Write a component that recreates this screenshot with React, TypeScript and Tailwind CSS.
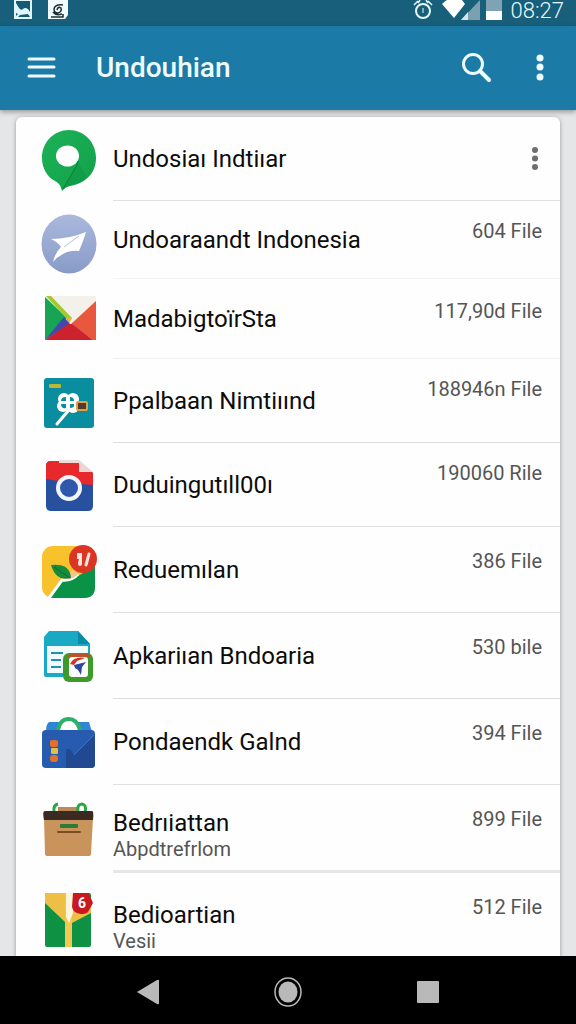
import React from 'react';

type Row = {
  name: string;
  detail?: string;
  count?: string;
  icon: React.ReactNode;
  height: string;
  thickLine?: boolean;
  line?: string;
  nameTop?: string;
  countTop?: string;
};

const PinIcon = () => (
  <>
    <defs>
      <linearGradient id="pin" x1="0" y1="0" x2="1" y2="1">
        <stop offset="0" stopColor="#1cb257" />
        <stop offset="1" stopColor="#12a04a" />
      </linearGradient>
    </defs>
    <path d="M28 3C43 3 55 15 55 31C55 46 45 56 29 59Q24 60 21 64Q19 56 14 54C6 50 1 41 1 31C1 15 13 3 28 3Z" fill="url(#pin)" />
    <path d="M37 35L21 64Q24 60 29 59C37 58 42 55 46 50Z" fill="#0c8f40" opacity=".35" />
    <ellipse cx="26.500" cy="29" rx="11.500" ry="10.500" fill="#fff" />
    <path d="M37 34L36 38L22 62" stroke="#0b7f38" strokeWidth="1" fill="none" />
  </>
);

const PlaneIcon = () => (
  <>
    <defs>
      <linearGradient id="plane" x1="0" y1="0" x2="0" y2="1">
        <stop offset="0" stopColor="#aab8dc" />
        <stop offset="1" stopColor="#889bc8" />
      </linearGradient>
    </defs>
    <ellipse cx="28" cy="36" rx="27.500" ry="29.500" fill="url(#plane)" />
    <path d="M10 31Q28 31 45 24Q42 34 38 43Q29 42 22 46Q16 49 12 54Q14 45 20 39Q17 34 10 31Z" fill="#fff" />
    <path d="M23 39L38 28" stroke="#b9c2da" strokeWidth="1" fill="none" />
  </>
);

const EnvelopeIcon = () => (
  <>
    <rect x="4" y="9" width="51" height="44" rx="1" fill="#f3f1ea" />
    <path d="M4 10L26 31L4 53Z" fill="#17a454" />
    <path d="M5 9H10L31 31L28 36L24 30Z" fill="#a5c832" />
    <path d="M26 30L31 31L28 36Z" fill="#e8b43a" />
    <path d="M4 53L23 30L29 37Z" fill="#3f49b0" />
    <path d="M30 37L55 14V53H52Z" fill="#e8583f" />
    <path d="M4 53L27 37H31L52 53Z" fill="#cd222d" />
  </>
);

const ReelIcon = () => (
  <>
    <rect x="3" y="9" width="50" height="50" rx="3" fill="#0b8da0" />
    <rect x="8" y="15" width="12" height="4" rx="1" fill="#b9b736" />
    <path d="M27 42L16 55" stroke="#fff" strokeWidth="3" strokeLinecap="round" />
    <g fill="#fff">
      <circle cx="23" cy="30" r="6" />
      <circle cx="32" cy="30" r="6" />
      <circle cx="22" cy="37" r="6" />
      <circle cx="32" cy="38" r="6" />
      <rect x="22" y="28" width="12" height="12" />
    </g>
    <g fill="#0b8da0">
      <path d="M25 28V32H20Q20 28 25 28Z" />
      <path d="M29 28Q33 28 33 32H29Z" />
      <path d="M20 35H25V39Q20 40 20 35Z" />
      <path d="M29 35H33Q34 39 29 39Z" />
    </g>
    <rect x="36" y="33" width="10" height="8" rx="1" fill="#55382e" stroke="#dfa04a" strokeWidth="2" />
  </>
);

const CameraIcon = () => (
  <>
    <path d="M10 8H38L52 20V53Q52 58 47 58H10Q5 58 5 53V13Q5 8 10 8Z" fill="#27509f" />
    <path d="M5 26V13Q5 8 10 8H38L52 20V32Q38 31 28 29Q15 28 5 26Z" fill="#e8292b" />
    <path d="M18 7H38L40 10H18Z" fill="#ecdcda" />
    <path d="M38 7V19H52Z" fill="#ead6d3" />
    <circle cx="28" cy="35" r="11" fill="#2f58aa" stroke="#f2f5fa" strokeWidth="4" />
  </>
);

const LeafIcon = () => (
  <>
    <rect x="1" y="8" width="53" height="52" rx="11" fill="#f7c22c" />
    <path d="M9 60L22 42L37 38L54 28V49Q54 60 43 60Z" fill="#0a9346" />
    <path d="M8 60L21 42Q31 43 37 36" stroke="#fff" strokeWidth="3" fill="none" />
    <path d="M26 38L32 32L37 36Q33 41 26 41Z" fill="#efc592" />
    <path d="M10 27Q29 25 30 40Q15 44 10 27Z" fill="#168b3c" />
    <path d="M13 29L29 40" stroke="#0b6a2c" strokeWidth="1" fill="none" />
    <circle cx="42" cy="21" r="14" fill="#dc3524" />
    <path d="M36 15H41V26Q41 28 39 28Q37 28 37 25L38 21H36Z" fill="#fbe6df" />
    <path d="M48 16L45 27" stroke="#fbe6df" strokeWidth="3" strokeLinecap="round" />
  </>
);

const DocumentIcon = () => (
  <>
    <path d="M8 7H37L49 20V53H5Q3 53 3 51V13Z" fill="#19a9c5" />
    <path d="M37 7L49 20H37Z" fill="#0c8ba8" />
    <rect x="6" y="22" width="41" height="27" fill="#f1fbfd" />
    <path d="M10 29H22M10 36H20M10 43H20" stroke="#1e93ae" strokeWidth="2" />
    <rect x="22" y="29" width="30" height="29" rx="6" fill="#3f9a2c" />
    <path d="M27 31Q32 29 38 29H46L50 32L44 36H28Z" fill="#b9542a" />
    <rect x="28" y="33" width="19" height="20" rx="3" fill="#fff" />
    <path d="M29 40Q33 32 44 34L36 37L33 41Z" fill="#d93226" />
    <path d="M33 41L45 38L41 43L40 51L37 46L34 44Z" fill="#3145a3" />
  </>
);

const BriefcaseIcon = () => (
  <>
    <path d="M8 12H48L51 22H5Q5 14 8 12Z" fill="#2f86d2" />
    <path d="M18 21Q19 9 28 9Q37 9 39 21Z" fill="#fff" />
    <path d="M17 20Q19 9 28 9Q36 9 39 20" fill="none" stroke="#2bb268" strokeWidth="4" />
    <rect x="1" y="20" width="53" height="38" rx="4" fill="#265bb0" />
    <path d="M25 39H29L33 45L54 24V54Q54 58 50 58H25Z" fill="#204991" />
    <path d="M33 45L53 25" fill="none" stroke="#3a73c8" strokeWidth="1" />
    <rect x="9" y="30" width="8" height="7" rx="2" fill="#e2702c" />
    <rect x="10" y="38" width="7" height="6" rx="1" fill="#e0bf45" />
    <rect x="9" y="45" width="8" height="7" rx="3" fill="#e2702c" />
  </>
);

const BasketIcon = () => (
  <>
    <path d="M3 21H52L50 57Q50 59 47 59H7Q4 59 4 57Z" fill="#c8945c" />
    <rect x="17" y="10" width="19" height="5" fill="#b98a56" />
    <path d="M13 15Q12 8 17 7M37 14Q36 7 41 7Q46 8 44 15" stroke="#2aa544" strokeWidth="3" fill="none" />
    <path d="M4 14H51Q53 14 52 23H3Q1 14 4 14Z" fill="#3b2a22" />
    <rect x="19" y="27" width="18" height="4" rx="1" fill="#2d7a35" />
    <rect x="16" y="34" width="24" height="2" rx="1" fill="#7d4d22" />
  </>
);

const ParcelIcon = () => (
  <>
    <rect x="4" y="10" width="46" height="54" rx="2" fill="#0e9142" />
    <path d="M4 10H24V39L4 20Z" fill="#efbf45" />
    <path d="M31 24H50V30L31 40Z" fill="#efbf45" />
    <rect x="24" y="10" width="7" height="54" fill="#f2c852" />
    <path d="M25 10H32V30L28 40L25 34Z" fill="#fdf6dc" />
    <path d="M32 10H46Q48 10 49 13L52 20L47 29Q45 31 40 31Q32 30 31 24Z" fill="#ca1820" />
    <text x="41" y="25" textAnchor="middle" fontSize="14" fontWeight="700" fill="#fff">6</text>
  </>
);

const rows: Row[] = [
  { name: 'Undosiaı Indtiıar', icon: <PinIcon />, height: 'h-[84px]' },
  { name: 'Undoaraandt Indonesia', count: '604 File', icon: <PlaneIcon />, height: 'h-[78px]', line: 'border-[#f4f4f4]', countTop: 'pt-[18px]' },
  { name: 'MadabigtoïrSta', count: '117,90d File', icon: <EnvelopeIcon />, height: 'h-[80px]', line: 'border-[#f0f0f0]', countTop: 'pt-5' },
  { name: 'Ppalbaan Nimtiıınd', count: '188946n File', icon: <ReelIcon />, height: 'h-[84px]', countTop: 'pt-[18px]' },
  { name: 'Duduingutıll00ı', count: '190060 Rile', icon: <CameraIcon />, height: 'h-[84px]', countTop: 'pt-[18px]' },
  { name: 'Reduemılan', count: '386 File', icon: <LeafIcon />, height: 'h-[86px]' },
  { name: 'Apkariıan Bndoaria', count: '530 bile', icon: <DocumentIcon />, height: 'h-[86px]' },
  { name: 'Pondaendk Galnd', count: '394 File', icon: <BriefcaseIcon />, height: 'h-[86px]' },
  { name: 'Bedrıiattan', detail: 'Abpdtrefrlom', count: '899 File', icon: <BasketIcon />, height: 'h-[88px]', thickLine: true, nameTop: 'pt-6' },
  { name: 'Bedioartian', detail: 'Vesii', count: '512 File', icon: <ParcelIcon />, height: 'h-[83px]', line: 'border-transparent', nameTop: 'pt-7' },
];

const StatusBar = () => (
  <div className="flex h-[26px] items-start justify-between bg-[#175f7b] pl-3.5 pr-3 text-[#e6fafd]">
    <div className="flex gap-4">
      <svg width="18" height="19" viewBox="0 0 18 19">
        <path d="M0 0H18V19H0Z" fill="#dff6fa" />
        <path d="M2 1H16V12L14 9Q11 7 9 9Q7 11 5 8L2 3ZM2 13L4 14L2 16ZM14 14L16 17H4L6 15Z" fill="#155a75" />
      </svg>
      <svg width="20" height="19" viewBox="0 0 20 19">
        <path d="M0 0H20V15L17 19H0Z" fill="#f2fcfd" />
        <path d="M15 5Q7 4 6 9Q6 13 10 13Q14 12 13 8Q10 6 9 10M5 12Q8 16 14 14M3 17H15V14" stroke="#1b2e36" strokeWidth="1.500" fill="none" />
      </svg>
    </div>
    <div className="flex">
      <svg width="20" height="20" viewBox="0 0 20 20" fill="none" stroke="currentColor">
        <circle cx="10" cy="11" r="7" strokeWidth="2" />
        <path d="M1 5L5 1M19 5L15 1M7 0L5 3M13 0L15 3" strokeWidth="1.500" />
        <path d="M10 8V13" strokeWidth="1" />
      </svg>
      <svg className="ml-2" width="40" height="20" viewBox="0 0 40 20">
        <path d="M39 0V20H20Z" fill="#7ba0b0" />
        <path d="M27 12V20H20Z" fill="#d5e5ea" />
        <path d="M1 4Q4 1 6 0H21L24 4L13 18Z" fill="#fff" />
      </svg>
      <svg className="ml-1" width="18" height="20" viewBox="0 0 18 20">
        <path d="M1 0H17V20H1Z" fill="#7fa3b4" />
        <path d="M1 11H17V20H1Z" fill="#fff" />
      </svg>
      <span className="ml-2 text-[22px] font-light leading-[22px]">08:27</span>
    </div>
  </div>
);

const Header = () => (
  <header className="relative flex h-[84px] items-center bg-[#1b7ba6] pl-[26px] pr-6 text-[#effcff] shadow-[0_2px_5px_rgba(0,0,0,0.35)]">
    <button type="button" aria-label="Menu">
      <svg width="30" height="22" viewBox="0 0 30 22" stroke="currentColor" strokeWidth="3" strokeLinecap="round">
        <path d="M3 2H28M3 10H28M3 19H28" />
      </svg>
    </button>
    <h1 className="ml-10 flex-1 text-[28px] font-medium leading-9">Undouhian</h1>
    <button type="button" aria-label="Search">
      <svg width="32" height="32" viewBox="0 0 32 32" fill="none" stroke="currentColor" strokeLinecap="round">
        <circle cx="12" cy="12" r="9.500" strokeWidth="3" />
        <path d="M19 19L28 28" strokeWidth="4" />
      </svg>
    </button>
    <button type="button" aria-label="More" className="ml-[35px] flex w-6 justify-center">
      <svg width="8" height="28" viewBox="0 0 8 28" fill="currentColor">
        <circle cx="4" cy="4" r="3.500" />
        <circle cx="4" cy="13" r="3.500" />
        <circle cx="4" cy="23" r="3.500" />
      </svg>
    </button>
  </header>
);

const ListRow = ({ row }: { row: Row }) => (
  <li className={`flex items-center gap-4 pl-[25px] ${row.height}`}>
    <svg className="shrink-0 overflow-visible" width="56" height="64" viewBox="0 0 56 64">
      {row.icon}
    </svg>
    <div
      className={`flex h-full min-w-0 flex-1 justify-between pr-[18px] ${
        row.thickLine ? 'border-b-[3px] border-[#e5e6e8]' : `border-b ${row.line ?? 'border-[#dfdfe0]'}`
      }`}
    >
      <div className={row.nameTop ?? 'self-center'}>
        <p className="whitespace-nowrap text-[24px] leading-7 text-[#0c0c0c]">{row.name}</p>
        {row.detail && <p className="text-[20px] leading-6 text-[#555]">{row.detail}</p>}
      </div>
      {row.count ? (
        <span className={`whitespace-nowrap text-[20px] leading-6 text-[#555] ${row.countTop ?? 'pt-[22px]'}`}>
          {row.count}
        </span>
      ) : (
        <button type="button" aria-label="Options" className="-mr-1 self-center px-2 text-[#6e6e6e]">
          <svg width="6" height="24" viewBox="0 0 6 24" fill="currentColor">
            <circle cx="3" cy="3" r="3" />
            <circle cx="3" cy="11.500" r="3" />
            <circle cx="3" cy="20" r="3" />
          </svg>
        </button>
      )}
    </div>
  </li>
);

const BottomNav = () => (
  <nav className="flex h-[68px] items-center justify-center gap-[92px] bg-black pt-1 text-[#b9b9b9]">
    <button type="button" aria-label="Back" className="flex w-12 justify-center">
      <svg width="22" height="26" viewBox="0 0 22 26" fill="currentColor">
        <path d="M0 13L20 1Q22 0 22 2V24Q22 26 20 25Z" />
      </svg>
    </button>
    <button type="button" aria-label="Home" className="flex w-12 justify-center">
      <svg width="28" height="30" viewBox="0 0 28 30">
        <ellipse cx="14" cy="15" rx="13" ry="14" fill="none" stroke="currentColor" strokeWidth="1.500" />
        <ellipse cx="14" cy="15" rx="9.500" ry="10.500" fill="currentColor" />
      </svg>
    </button>
    <button type="button" aria-label="Recent" className="flex w-12 justify-center">
      <svg width="22" height="22" viewBox="0 0 22 22" fill="currentColor">
        <rect width="22" height="22" rx="1" />
      </svg>
    </button>
  </nav>
);

const App: React.FC = () => {
  return (
    <div className="flex min-h-screen flex-col bg-[#e5e6e8] font-['Roboto',sans-serif]">
      <StatusBar />
      <Header />
      <main className="flex flex-1 flex-col px-4 pt-[7px]">
        <ul className="flex-1 rounded-t-md bg-[#fefefe] shadow-[0_1px_4px_rgba(0,0,0,0.35)]">
          {rows.map((row) => (
            <ListRow key={row.name} row={row} />
          ))}
        </ul>
      </main>
      <BottomNav />
    </div>
  );
};

export default App;
